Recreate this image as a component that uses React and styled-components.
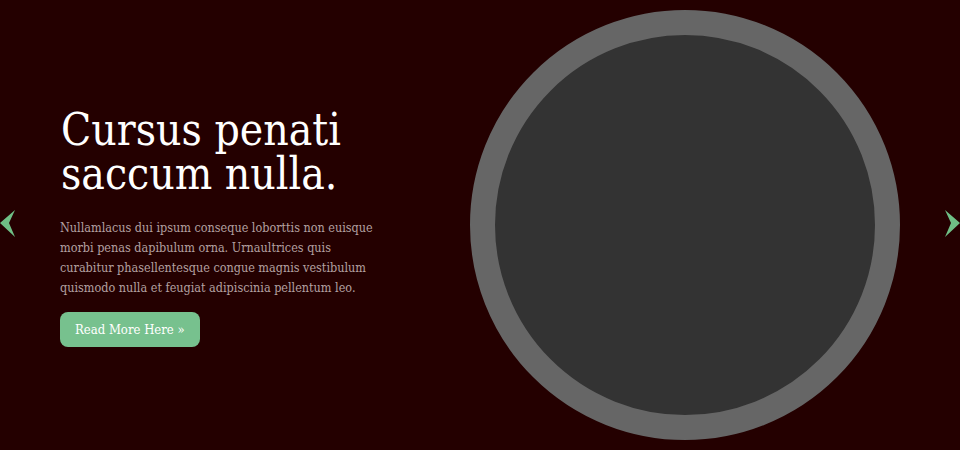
import styled, { createGlobalStyle } from "styled-components";

const GlobalStyle = createGlobalStyle`
  html, body {
    margin: 0;
    padding: 0;
    background: #240000;
  }
`;

const Slider = styled.div`
  position: relative;
  width: 960px;
  height: 450px;
  background: #240000;
  overflow: hidden;
  display: flex;
  align-items: center;
`;

const Slide = styled.div`
  display: flex;
  align-items: center;
  width: 100%;
  padding-left: 60px;
  box-sizing: border-box;
`;

const Copy = styled.div`
  width: 330px;
  margin-top: 4px;
`;

const Title = styled.h2`
  margin: 0 0 22px 1px;
  font-family: "DejaVu Serif Condensed", "DejaVu Serif", Georgia, serif;
  font-weight: normal;
  font-size: 44px;
  line-height: 44px;
  color: #ffffff;
`;

const Text = styled.p`
  margin: 0 0 14px;
  font-family: "DejaVu Serif Condensed", "DejaVu Serif", serif;
  font-size: 12.5px;
  line-height: 20px;
  color: #b3a0a0;
  white-space: nowrap;
`;

const Button = styled.a`
  display: inline-block;
  padding: 0 15px;
  height: 35px;
  line-height: 35px;
  border-radius: 8px;
  background: #77c18e;
  color: #ffffff;
  font-family: "DejaVu Serif Condensed", "DejaVu Serif", serif;
  font-size: 13px;
  text-decoration: none;
`;

const Visual = styled.div`
  margin-left: 80px;
  width: 380px;
  height: 380px;
  border-radius: 50%;
  background: #333333;
  border: 25px solid #666666;
  flex-shrink: 0;
`;

const Arrow = styled.div`
  position: absolute;
  top: 210px;
  ${(p) => (p.side === "left" ? "left: 0;" : "right: 0;")}
  width: 16px;
  height: 28px;
`;

function Chevron({ dir }) {
  const d =
    dir === "left"
      ? "M15 0 L0 13 L15 27 L9 13 Z"
      : "M1 0 L16 13 L1 27 L7 13 Z";
  return (
    <svg width="16" height="28" viewBox="0 0 16 28">
      <path d={d} fill="#6fbf85" />
    </svg>
  );
}

export default function App() {
  return (
    <>
      <GlobalStyle />
      <Slider>
        <Slide>
          <Copy>
            <Title>
              Cursus penati
              <br />
              saccum nulla.
            </Title>
            <Text>
              Nullamlacus dui ipsum conseque loborttis non euisque
              <br />
              morbi penas dapibulum orna. Urnaultrices quis
              <br />
              curabitur phasellentesque congue magnis vestibulum
              <br />
              quismodo nulla et feugiat adipiscinia pellentum leo.
            </Text>
            <Button href="#">Read More Here »</Button>
          </Copy>
          <Visual />
        </Slide>
        <Arrow side="left">
          <Chevron dir="left" />
        </Arrow>
        <Arrow side="right">
          <Chevron dir="right" />
        </Arrow>
      </Slider>
    </>
  );
}
